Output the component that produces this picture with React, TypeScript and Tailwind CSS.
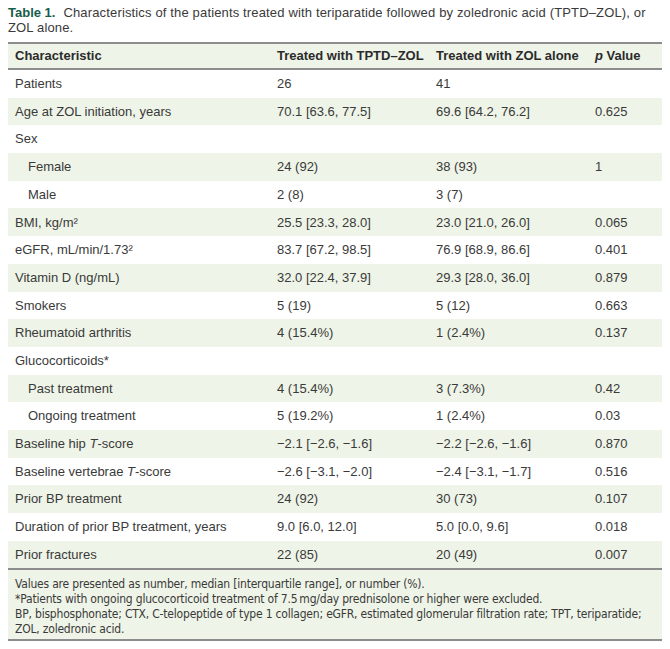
import React from 'react';

// ============================================
// DATA
// ============================================

type Row = {
  label: React.ReactNode;
  a?: string;
  b?: string;
  p?: string;
  indent?: boolean;
};

const rows: Row[] = [
  { label: 'Patients', a: '26', b: '41' },
  { label: 'Age at ZOL initiation, years', a: '70.1 [63.6, 77.5]', b: '69.6 [64.2, 76.2]', p: '0.625' },
  { label: 'Sex' },
  { label: 'Female', a: '24 (92)', b: '38 (93)', p: '1', indent: true },
  { label: 'Male', a: '2 (8)', b: '3 (7)', indent: true },
  { label: 'BMI, kg/m²', a: '25.5 [23.3, 28.0]', b: '23.0 [21.0, 26.0]', p: '0.065' },
  { label: 'eGFR, mL/min/1.73²', a: '83.7 [67.2, 98.5]', b: '76.9 [68.9, 86.6]', p: '0.401' },
  { label: 'Vitamin D (ng/mL)', a: '32.0 [22.4, 37.9]', b: '29.3 [28.0, 36.0]', p: '0.879' },
  { label: 'Smokers', a: '5 (19)', b: '5 (12)', p: '0.663' },
  { label: 'Rheumatoid arthritis', a: '4 (15.4%)', b: '1 (2.4%)', p: '0.137' },
  { label: 'Glucocorticoids*' },
  { label: 'Past treatment', a: '4 (15.4%)', b: '3 (7.3%)', p: '0.42', indent: true },
  { label: 'Ongoing treatment', a: '5 (19.2%)', b: '1 (2.4%)', p: '0.03', indent: true },
  {
    label: (
      <>
        Baseline hip <i>T</i>-score
      </>
    ),
    a: '−2.1 [−2.6, −1.6]',
    b: '−2.2 [−2.6, −1.6]',
    p: '0.870',
  },
  {
    label: (
      <>
        Baseline vertebrae <i>T</i>-score
      </>
    ),
    a: '−2.6 [−3.1, −2.0]',
    b: '−2.4 [−3.1, −1.7]',
    p: '0.516',
  },
  { label: 'Prior BP treatment', a: '24 (92)', b: '30 (73)', p: '0.107' },
  { label: 'Duration of prior BP treatment, years', a: '9.0 [6.0, 12.0]', b: '5.0 [0.0, 9.6]', p: '0.018' },
  { label: 'Prior fractures', a: '22 (85)', b: '20 (49)', p: '0.007' },
];

const notes = [
  'Values are presented as number, median [interquartile range], or number (%).',
  '*Patients with ongoing glucocorticoid treatment of 7.5\u2009mg/day prednisolone or higher were excluded.',
  'BP, bisphosphonate; CTX, C-telopeptide of type 1 collagen; eGFR, estimated glomerular filtration rate; TPT, teriparatide;',
  'ZOL, zoledronic acid.',
];

// ============================================
// TABLE ROW
// ============================================

function TableRow({ row, striped }: { row: Row; striped: boolean }) {
  return (
    <div className={`flex items-center h-[27.7px] ${striped ? 'bg-[#eef4e7]' : 'bg-white'}`}>
      <div className={`w-[269px] ${row.indent ? 'pl-[20px]' : 'pl-[7px]'}`}>{row.label}</div>
      <div className="w-[159px]">{row.a}</div>
      <div className="w-[159px]">{row.b}</div>
      <div className="flex-1">{row.p}</div>
    </div>
  );
}

// ============================================
// MAIN
// ============================================

export default function App() {
  return (
    <div
      className="w-[670px] h-[649px] bg-white px-[8px] pt-[5px] text-[13px] text-[#3a3a3a] overflow-hidden"
      style={{ fontFamily: '"Liberation Sans", Arial, sans-serif' }}
    >
      <p className="leading-[15px] tracking-[0.15px] whitespace-nowrap">
        <span className="font-bold text-[#175e4c] tracking-normal">Table 1.</span>
        <span className="inline-block w-[8px]" />
        Characteristics of the patients treated with teriparatide followed by zoledronic acid (TPTD–ZOL), or
        <br />
        ZOL alone.
      </p>

      <div className="mt-[7px] w-[654px]">
        <div className="flex items-center h-[28px] bg-[#eef4e7] border-y-2 border-[#8d8d8d] font-bold text-[#2b2b2b]">
          <div className="w-[269px] pl-[7px]">Characteristic</div>
          <div className="w-[159px]">Treated with TPTD–ZOL</div>
          <div className="w-[159px]">Treated with ZOL alone</div>
          <div className="flex-1">
            <i>p</i> Value
          </div>
        </div>

        {rows.map((row, i) => (
          <TableRow key={i} row={row} striped={i % 2 === 1} />
        ))}

        <div
          className="bg-[#eef4e7] border-y-2 border-[#8d8d8d] pl-[7px] pt-[7px] pb-[2px] text-[12px] leading-[15px] tracking-[-0.2px] font-stretch-condensed"
          style={{ fontFamily: '"DejaVu Sans", sans-serif' }}
        >
          {notes.map((n, i) => (
            <p key={i} className="whitespace-nowrap">
              {n}
            </p>
          ))}
        </div>
      </div>
    </div>
  );
}
